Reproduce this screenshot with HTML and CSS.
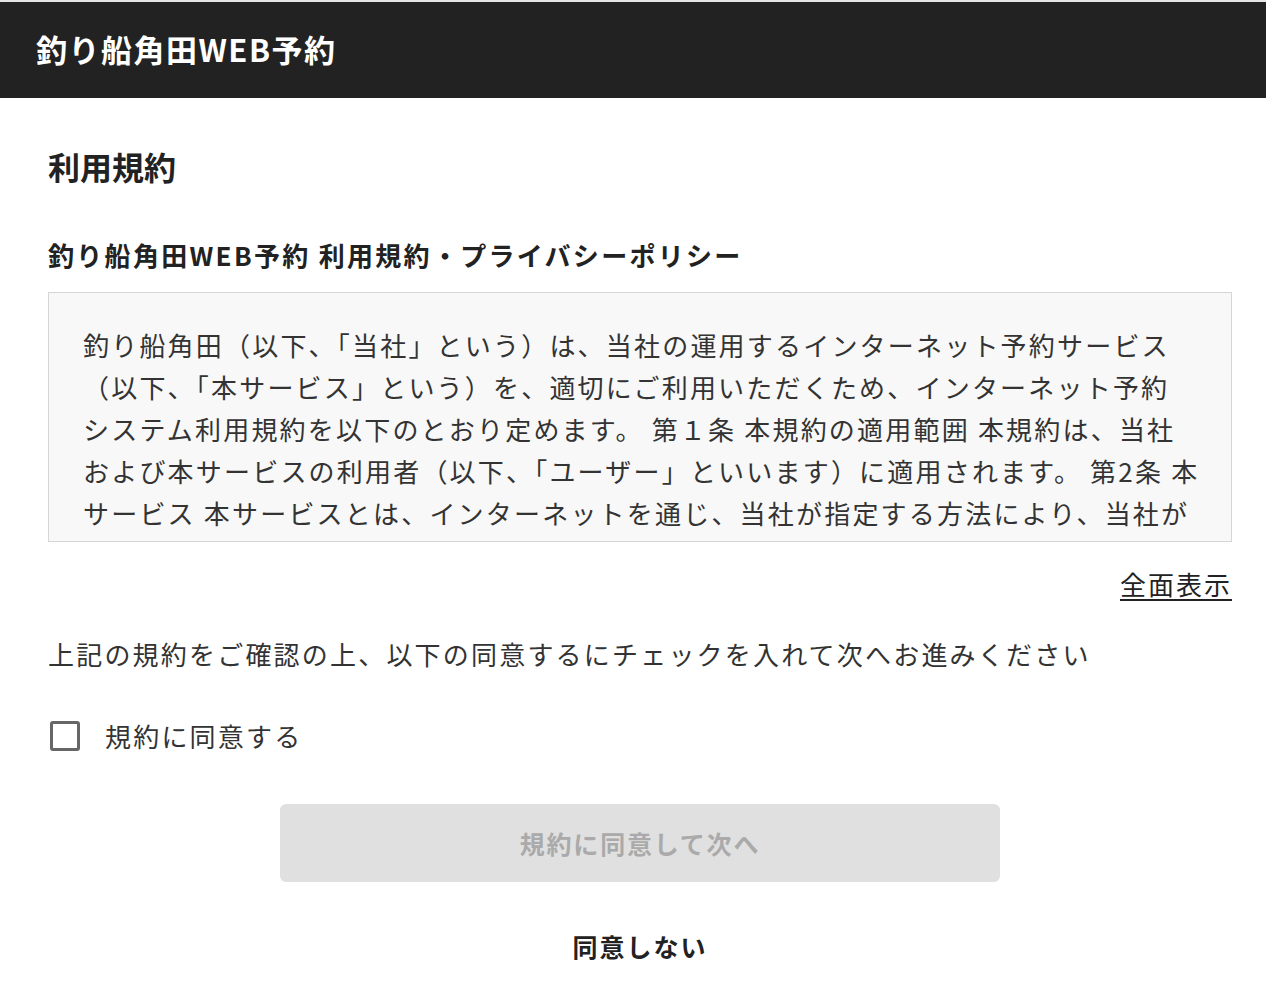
FILE: index.html
```html
<!DOCTYPE html>
<html lang="ja">
<head>
  <meta charset="UTF-8">
  <meta name="viewport" content="width=device-width, initial-scale=1">
  <title>釣り船角田WEB予約</title>
  <link rel="stylesheet" href="styles.css">
</head>
<body>
  <header class="site-header">
    <div class="site-title">釣り船角田WEB予約</div>
  </header>
  <main class="terms-page">
    <h1 class="page-title">利用規約</h1>
    <h2 class="terms-title">釣り船角田WEB予約 利用規約・プライバシーポリシー</h2>
    <div class="terms-box">
      <p>釣り船角田（以下、「当社」という）は、当社の運用するインターネット予約サービス<br>（以下、「本サービス」という）を、適切にご利用いただくため、インターネット予約<br>システム利用規約を以下のとおり定めます。 第１条 本規約の適用範囲 本規約は、当社<br>および本サービスの利用者（以下、「ユーザー」といいます）に適用されます。 第2条 本<br>サービス 本サービスとは、インターネットを通じ、当社が指定する方法により、当社が<br>提供する釣り船の予約を受け付けるサービスをいいます。</p>
    </div>
    <div class="full-link-row">
      <a href="#" class="full-link">全面表示</a>
    </div>
    <p class="notice">上記の規約をご確認の上、以下の同意するにチェックを入れて次へお進みください</p>
    <label class="agree-check">
      <input type="checkbox" id="agree">
      <span class="check-box"></span>
      <span>規約に同意する</span>
    </label>
    <div class="actions">
      <button type="button" class="next-btn" id="nextBtn" disabled>規約に同意して次へ</button>
      <a href="#" class="decline-link">同意しない</a>
    </div>
  </main>
  <script>
    document.getElementById('agree').addEventListener('change', function() {
      document.getElementById('nextBtn').disabled = !this.checked;
    });
  </script>
</body>
</html>
```

FILE: styles.css
```css
body {
  margin: 0;
  background: #fff;
  color: #222;
  font-family: "Noto Sans CJK JP", "Noto Sans", sans-serif;
  border-top: 2px solid #e6e6e6;
}
.site-header {
  background: #222;
  height: 96px;
  display: flex;
  align-items: center;
  padding: 0 36px 4px 36px;
  box-sizing: border-box;
}
.site-title {
  color: #fff;
  font-size: 31px;
  font-weight: 700;
  line-height: 1;
  letter-spacing: 1.5px;
}
.terms-page {
  padding: 0 34px 40px 48px;
}
.page-title {
  margin: 48px 0 0 0;
  font-size: 32px;
  font-weight: 700;
  line-height: 40px;
  color: #222;
}
.terms-title {
  margin: 52px 0 0 0;
  font-size: 26px;
  font-weight: 700;
  line-height: 34px;
  letter-spacing: 2.3px;
  color: #222;
}
.terms-box {
  margin-top: 20px;
  height: 248px;
  overflow: hidden;
  background: #f8f8f8;
  border: 1px solid #d6d6d6;
  padding: 0 30px 0 34px;
}
.terms-box p {
  margin: 31px 0 0 0;
  font-size: 26px;
  line-height: 42px;
  letter-spacing: 2.2px;
  white-space: nowrap;
  color: #333;
}
.full-link-row {
  display: flex;
  justify-content: flex-end;
  margin-top: 24px;
}
.full-link {
  color: #222;
  font-size: 26px;
  line-height: 36px;
  letter-spacing: 2px;
  text-decoration: underline;
  text-underline-offset: 4px;
}
.notice {
  margin: 34px 0 0 0;
  font-size: 26px;
  line-height: 36px;
  letter-spacing: 2.2px;
  color: #333;
}
.agree-check {
  display: flex;
  align-items: center;
  gap: 25px;
  margin-top: 46px;
  font-size: 26px;
  line-height: 36px;
  letter-spacing: 2.2px;
  color: #333;
  cursor: pointer;
}
.agree-check input {
  display: none;
}
.check-box {
  width: 24px;
  height: 24px;
  margin-left: 2px;
  border: 3px solid #666;
  border-radius: 3px;
  background: #fff;
}
.agree-check input:checked + .check-box {
  background: #222;
  border-color: #222;
}
.actions {
  display: flex;
  flex-direction: column;
  align-items: center;
  margin-top: 50px;
}
.next-btn {
  width: 720px;
  height: 78px;
  border: none;
  border-radius: 6px;
  background: #e0e0e0;
  color: #aaa;
  font-family: inherit;
  font-size: 25px;
  font-weight: 700;
  letter-spacing: 1.8px;
}
.next-btn:not(:disabled) {
  background: #222;
  color: #fff;
  cursor: pointer;
}
.decline-link {
  margin-top: 47px;
  color: #222;
  font-size: 25px;
  font-weight: 700;
  line-height: 34px;
  text-decoration: none;
  letter-spacing: 2px;
}
```
